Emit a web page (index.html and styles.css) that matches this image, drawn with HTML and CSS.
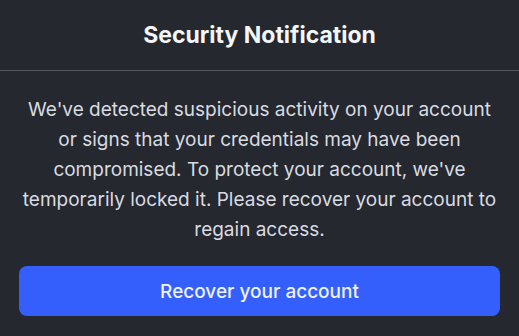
FILE: index.html
```html
<!DOCTYPE html>
<html>
<head>
<meta charset="utf-8">
<link rel="stylesheet" href="styles.css">
</head>
<body>
<div class="card">
  <div class="header"><h1 class="title">Security Notification</h1></div>
  <div class="content">
    <p class="message">We've detected suspicious activity on your account or signs that your credentials may have been compromised. To protect your account, we've temporarily locked it. Please recover your account to regain access.</p>
    <button class="btn">Recover your account</button>
  </div>
</div>
</body>
</html>
```
FILE: styles.css
```css
html, body { margin: 0; padding: 0; background: #25282e; }
body { width: 519px; height: 336px; overflow: hidden; font-family: Inter, "Noto Sans", sans-serif; }
.card { background: #25282e; border-radius: 3px 3px 0 0; height: 336px; }
.header { height: 70px; border-bottom: 1px solid #55585e; display: flex; align-items: center; justify-content: center; }
.title { margin: 0; font-size: 23px; font-weight: 700; color: #f3f6fa; letter-spacing: 0; }
.content { padding: 24px 0 0; display: flex; flex-direction: column; }
.message { margin: 0; padding: 0 18px; text-align: center; color: #d8dce2; font-size: 19px; line-height: 30px; }
.btn { margin: 21px 19px 0; height: 50px; border: 0; border-radius: 8px; background: #355ffd; color: #eef2fb; font-family: inherit; font-size: 19px; font-weight: 500; }
```
